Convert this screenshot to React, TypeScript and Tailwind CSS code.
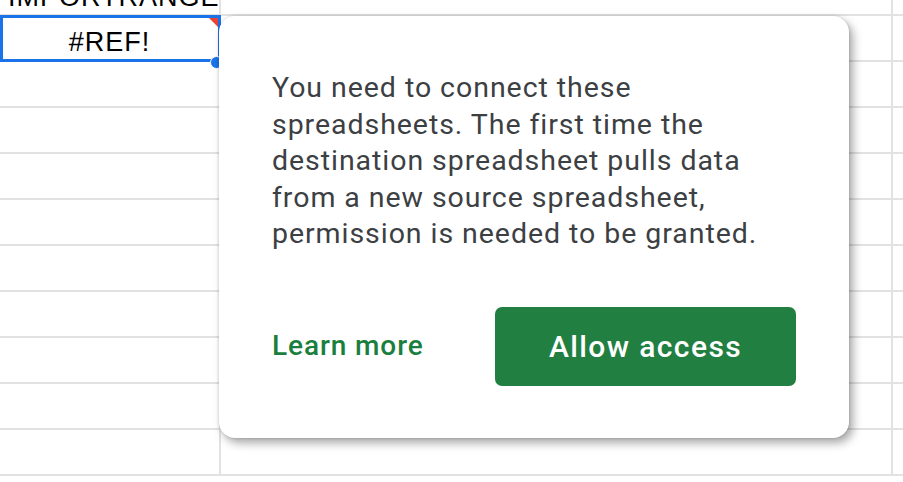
const rows = Array.from({ length: 11 });

function Cell({ children, first, last }: { children?: React.ReactNode; first?: boolean; last?: boolean }) {
  if (first) {
    return <div className="w-[221px] shrink-0 border-r-2 border-[#e2e2e2]">{children}</div>;
  }
  if (last) {
    return <div className="flex-1">{children}</div>;
  }
  return <div className="w-[672px] shrink-0 border-r-2 border-[#e2e2e2]">{children}</div>;
}

export default function App() {
  return (
    <div className="relative w-[903px] h-[482px] overflow-hidden bg-white font-['Liberation_Sans',Arial,sans-serif]">
      {/* sheet grid */}
      <div className="flex flex-col -mt-[30px]">
        {rows.map((_, i) => (
          <div key={i} className="flex h-[46px] border-b-2 border-[#e2e2e2]">
            <Cell first>
              {i === 0 && (
                <div className="pt-[14px] pl-[8px] text-[27px] leading-none tracking-[1px] text-black whitespace-nowrap">
                  IMPORTRANGE
                </div>
              )}
              {i === 1 && (
                <div className="flex justify-center pt-[13px] text-[27px] leading-none tracking-[1px] text-black">
                  #REF!
                </div>
              )}
            </Cell>
            <Cell />
            <Cell last />
          </div>
        ))}
      </div>

      {/* selection */}
      <div className="absolute left-0 top-[15px] w-[221px] h-[47px] border-[3px] border-[#1a73e8]">
        <div className="absolute right-0 top-0 w-0 h-0 border-t-[9px] border-t-[#ea4335] border-l-[9px] border-l-transparent" />
      </div>
      <div className="absolute left-[210px] top-[56px] w-[13px] h-[13px] rounded-full bg-[#1a73e8] border border-white" />

      {/* popup card */}
      <div className="absolute left-[219px] top-[16px] w-[630px] h-[422px] rounded-[16px] bg-white shadow-[0_0_3px_rgba(0,0,0,0.18),4px_5px_10px_rgba(0,0,0,0.34)] pt-[54px] px-[53px] font-['Roboto',sans-serif]">
        <p className="text-[28.5px] leading-[36.5px] tracking-[0.95px] text-[#3c4043]">
          You need to connect these
          <br />
          spreadsheets. The first time the
          <br />
          destination spreadsheet pulls data
          <br />
          from a new source spreadsheet,
          <br />
          permission is needed to be granted.
        </p>
        <div className="mt-[54px] flex items-center justify-between">
          <span className="text-[28px] font-medium tracking-[0.9px] text-[#1a7f3e]">Learn more</span>
          <button className="w-[301px] h-[79px] rounded-[7px] bg-[#217f41] text-white text-[30px] font-medium tracking-[1.4px]">
            Allow access
          </button>
        </div>
      </div>
    </div>
  );
}
